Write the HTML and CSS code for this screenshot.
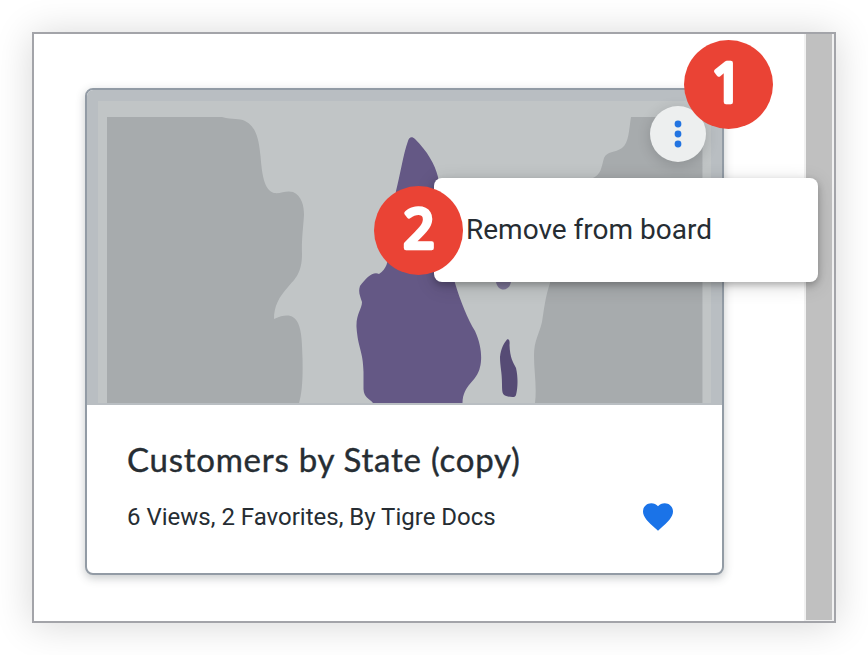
FILE: index.html
```html
<!DOCTYPE html>
<html lang="en">
<head>
<meta charset="utf-8">
<title>Board</title>
<link rel="stylesheet" href="styles.css">
</head>
<body>
<main class="window">
  <section class="board">
    <article class="card">
      <svg class="thumbnail" viewBox="87 90 635 315" aria-hidden="true">
        <path class="mat" d="M87 90H722V405H87Z"/>
        <path class="sea" d="M98 101H711V403H98Z"/>
        <path class="land" d="M107 117H222C233 120 239 118 245 121C257 127 259 141 260.500 156C262 174 264 190 274 193C281 194 286 190 293 192C302 196 304 206 304 215C303 230 301.500 240 302 254C302 273 295 279 288 287C279 297 274 306 274 319C287 313 294 315 298 323C302 332 302 344 302.500 358C303 379 302 393 299 403H107Z"/>
        <path class="land" d="M702 117H631C629 129 629 143 622 148C615 153 607 151 604 158C601 169 601 174 593 178C570 204 553 245 550 283C545 298 544 310 542 322C539 335 534 340 534 356C534 371 537 387 535 403H702Z"/>
        <path class="edge" d="M702 117H703V403H702Z"/>
        <path class="state" d="M408 141C409 137 412 136 415 139C427 151 435 164 438 177C440 191 443 240 455 283C460 300 468 320 475 331C482 346 482 360 480 367C477 382 463 384 462.500 403H373C369 398 364 398 363.500 389V372C363 350 358 349 356.500 327C356 314 362 309 362 302C360 296 358 292 360 286C366 278 373 271 379 274C387 269 388 261 388 255L396 191C400 176 403 155 408 141Z"/>
        <path class="state-light" d="M496 282C497 287 500 289.500 503.500 289.500C507 289.500 510 287 511 282Z"/>
        <path class="state-dark" d="M507 339.500C509 338.500 510 341 509.500 345C510 358 513 362 516 368C518.500 379 517.500 389 516 395C515 398 511 397 508 396.500C503 395 502 395 502 384C502 371 500 367 500 357C501 348 504 343 507 339.500Z"/>
      </svg>
      <div class="details">
        <h2 class="title">Customers by State (copy)</h2>
        <div class="meta">
          <span>6 Views, 2 Favorites, By Tigre Docs</span>
          <svg class="heart" viewBox="2 3 20 18.350"><path d="M12 21.350l-1.450-1.320C5.400 15.360 2 12.280 2 8.500 2 5.420 4.420 3 7.500 3c1.740 0 3.410.81 4.500 2.090C13.090 3.810 14.760 3 16.500 3 19.580 3 22 5.420 22 8.500c0 3.780-3.400 6.860-8.550 11.540L12 21.350z"/></svg>
        </div>
      </div>
      <button class="more" aria-label="More">
        <svg viewBox="0 0 56 56"><circle cx="28" cy="18" r="3.400"/><circle cx="28" cy="28" r="3.400"/><circle cx="28" cy="38" r="3.400"/></svg>
      </button>
      <div class="menu">Remove from board</div>
      <svg class="badge badge-one" viewBox="0 0 89 89"><circle cx="44.500" cy="44.500" r="44.500"/><text x="43" y="62">1</text></svg>
      <svg class="badge badge-two" viewBox="0 0 89 89"><circle cx="44.500" cy="44.500" r="44.500"/><text x="45" y="62">2</text></svg>
    </article>
  </section>
  <div class="scrollbar"><div class="thumb"></div></div>
</main>
</body>
</html>
```

FILE: styles.css
```css
* { box-sizing: border-box; }
body {
  margin: 0;
  padding: 32px;
  height: 655px;
  overflow: hidden;
  background: #fff;
  color: #262d33;
  font-family: Roboto, sans-serif;
}
.window {
  display: flex;
  height: 591px;
  border: 2px solid #a3a4a9;
  background: #fff;
  box-shadow: 0 2px 36px rgba(0, 0, 0, .16);
}
.board { flex: 1; padding: 54px 0 0 51px; }
.card {
  position: relative;
  width: 639px;
  height: 487px;
  border: 2px solid #929ba5;
  border-radius: 8px;
  background: #fff;
  box-shadow: 0 3px 10px rgba(50, 60, 65, .28);
}
.thumbnail {
  display: block;
  width: 635px;
  height: 315px;
  border-radius: 6px 6px 0 0;
}
.mat { fill: #b9bec2; }
.sea { fill: #c1c5c6; }
.land { fill: #a7abad; }
.edge { fill: #b5b9bb; }
.state { fill: #645885; }
.state-light { fill: #81799c; }
.state-dark { fill: #564b75; }
.details { padding: 33px 40px; }
.title {
  margin: 0;
  font: 400 33px/42px Lato, sans-serif;
  -webkit-text-stroke: .4px #262d33;
  letter-spacing: .75px;
  white-space: nowrap;
}
.meta {
  display: flex;
  justify-content: space-between;
  align-items: center;
  height: 30px;
  margin-top: 22px;
  padding-right: 9px;
  font-size: 24px;
  white-space: nowrap;
}
.heart { width: 30px; height: 28px; fill: #1a73e8; }
.more {
  position: absolute;
  top: 16px;
  left: 563px;
  width: 56px;
  height: 56px;
  padding: 0;
  border: 0;
  border-radius: 50%;
  background: #edefef;
  box-shadow: 0 3px 14px rgba(0, 0, 0, .16);
}
.more svg { display: block; width: 56px; height: 56px; fill: #2374e1; }
.menu {
  position: absolute;
  top: 88px;
  left: 347px;
  width: 384px;
  height: 104px;
  padding-left: 32px;
  border-radius: 8px;
  background: #fff;
  box-shadow: 0 3px 7px rgba(0, 0, 0, .25), 0 4px 20px rgba(0, 0, 0, .14);
  font-size: 28px;
  line-height: 103px;
  white-space: nowrap;
}
.badge { position: absolute; width: 89px; height: 89px; }
.badge circle { fill: #ea4335; }
.badge text {
  fill: #fff;
  stroke: #fff;
  stroke-width: 4.5px;
  stroke-linejoin: round;
  text-anchor: middle;
  font: 400 54px "Noto Sans", sans-serif;
}
.badge-one { top: -50px; left: 596.5px; }
.badge-two { top: 96px; left: 287px; }
.scrollbar { width: 30px; padding: 0 2px 1px; background: #f1f1f1; }
.thumb { height: 586px; background: #c0c0c0; }
```
